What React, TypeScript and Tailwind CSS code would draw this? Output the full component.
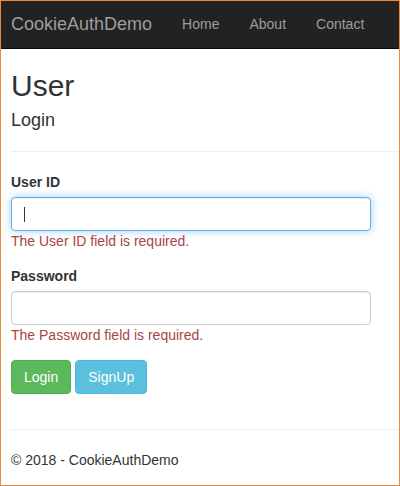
import React from 'react';

const font = { fontFamily: '"Liberation Sans", Arial, sans-serif' };

export default function App() {
  return (
    <div
      className="w-[400px] h-[486px] border border-[#ea8a3c] bg-white flex flex-col overflow-hidden text-[14px] leading-[20px] text-[#333]"
      style={font}
    >
      {/* Navbar */}
      <nav className="h-[48px] shrink-0 bg-[#222] border-b border-[#080808] flex items-center pb-[2px]">
        <span className="pl-[10px] pr-[15px] text-[18px] leading-[20px] text-[#9d9d9d]">CookieAuthDemo</span>
        <ul className="flex">
          {['Home', 'About', 'Contact'].map((l) => (
            <li key={l} className="px-[15px] text-[#9d9d9d]">{l}</li>
          ))}
        </ul>
      </nav>

      <main className="flex-1 flex flex-col pl-[10px]">
        <h2 className="mt-[20px] text-[30px] leading-[33px] font-medium">User</h2>
        <h4 className="mt-[8px] text-[18px] leading-[20px] font-medium">Login</h4>
        <hr className="mt-[21px] border-t border-[#eee]" />

        <div className="pr-[28px]">
          <label className="block mt-[20px] font-bold">User ID</label>
          <div className="mt-[5px] h-[34px] rounded-[4px] border border-[#66afe9] shadow-[inset_0_1px_1px_rgba(0,0,0,0.075),0_0_8px_rgba(102,175,233,0.6)] bg-white flex items-center px-[12px]">
            <span className="w-px h-[15px] bg-[#333]" />
          </div>
          <div className="text-[#a94442]">The User ID field is required.</div>

          <label className="block mt-[15px] font-bold">Password</label>
          <div className="mt-[5px] h-[34px] rounded-[4px] border border-[#ccc] shadow-[inset_0_1px_1px_rgba(0,0,0,0.075)] bg-white" />
          <div className="text-[#a94442]">The Password field is required.</div>

          <div className="mt-[15px] flex gap-[4px]">
            <button className="px-[12px] py-[6px] rounded-[4px] border border-[#4cae4c] bg-[#5cb85c] text-white leading-[20px]">
              Login
            </button>
            <button className="px-[12px] py-[6px] rounded-[4px] border border-[#46b8da] bg-[#5bc0de] text-white leading-[20px]">
              SignUp
            </button>
          </div>
        </div>

        <hr className="mt-[35px] border-t border-[#eee]" />
        <footer className="mt-[20px]">© 2018 - CookieAuthDemo</footer>
      </main>
    </div>
  );
}
